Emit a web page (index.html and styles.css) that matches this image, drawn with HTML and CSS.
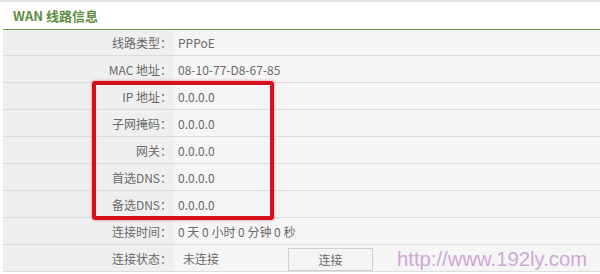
FILE: index.html
```html
<!DOCTYPE html>
<html lang="zh-CN">
<head>
<meta charset="utf-8">
<title>WAN 线路信息</title>
<link rel="stylesheet" href="styles.css">
</head>
<body>
<div class="topbar"></div>
<div class="panel">
  <div class="head">WAN 线路信息</div>
  <div class="rows">
    <div class="row"><div class="lbl">线路类型：</div><div class="val">PPPoE</div></div>
    <div class="row"><div class="lbl">MAC 地址：</div><div class="val">08-10-77-D8-67-85</div></div>
    <div class="row"><div class="lbl">IP 地址：</div><div class="val">0.0.0.0</div></div>
    <div class="row"><div class="lbl">子网掩码：</div><div class="val">0.0.0.0</div></div>
    <div class="row"><div class="lbl">网关：</div><div class="val">0.0.0.0</div></div>
    <div class="row"><div class="lbl">首选DNS：</div><div class="val">0.0.0.0</div></div>
    <div class="row"><div class="lbl">备选DNS：</div><div class="val">0.0.0.0</div></div>
    <div class="row"><div class="lbl">连接时间：</div><div class="val">0 天 0 小时 0 分钟 0 秒</div></div>
    <div class="row"><div class="lbl">连接状态：</div><div class="val status"><span class="state">未连接</span><button class="btn">连接</button></div></div>
  </div>
</div>
<div class="highlight"></div>
<div class="watermark">http://www.192ly.com</div>
</body>
</html>
```
FILE: styles.css
```css
html, body {
  margin: 0;
  padding: 0;
  background: #ffffff;
}
body {
  position: relative;
  width: 600px;
  height: 274px;
  overflow: hidden;
  font-family: "Noto Sans CJK SC", "Noto Sans", "Liberation Sans", sans-serif;
  font-size: 12px;
  color: #6a6a6a;
}
.topbar {
  height: 2px;
  background: #e2e2e2;
}
.panel {
  margin-left: 3px;
}
.head {
  height: 28px;
  box-sizing: border-box;
  padding-left: 10px;
  display: flex;
  align-items: center;
  font-size: 13px;
  font-weight: bold;
  color: #5e8d42;
  border-bottom: 1px solid #6c9654;
  box-shadow: 0 2px 2px -1px rgba(200, 235, 190, 0.6);
}
.row {
  display: grid;
  grid-template-columns: 170px 1fr;
  height: 27px;
  box-sizing: border-box;
  border-bottom: 1px solid #dcdcdc;
}
.row:first-child {
  height: 26px;
}
.lbl {
  background: #efefef;
  font-family: "Noto Sans CJK TC", "Noto Sans CJK SC", sans-serif;
  padding-right: 1px;
  display: flex;
  align-items: center;
  justify-content: flex-end;
  white-space: nowrap;
}
.val {
  background: #f5f5f5;
  padding-left: 5px;
  display: flex;
  align-items: center;
  white-space: nowrap;
}
.status .state {
  margin-left: 5px;
  width: 105px;
}
.btn {
  width: 85px;
  height: 23px;
  margin: 0;
  padding: 0;
  border: 1px solid #cfcfcf;
  background: #f4f4f4;
  font-family: "Noto Sans CJK SC", "Noto Sans", sans-serif;
  font-size: 12px;
  color: #6a6a6a;
  position: relative;
  top: 1px;
}
.highlight {
  position: absolute;
  left: 92px;
  top: 81px;
  width: 174px;
  height: 131px;
  border: 4px solid #d3111c;
  border-radius: 3px;
  box-shadow: 0 0 3px rgba(210, 20, 30, 0.55);
}
.watermark {
  position: absolute;
  left: 397px;
  top: 247px;
  font-family: "Liberation Sans", Arial, sans-serif;
  font-size: 20.3px;
  line-height: 24px;
  white-space: nowrap;
  color: #cfa8d8;
}
```
